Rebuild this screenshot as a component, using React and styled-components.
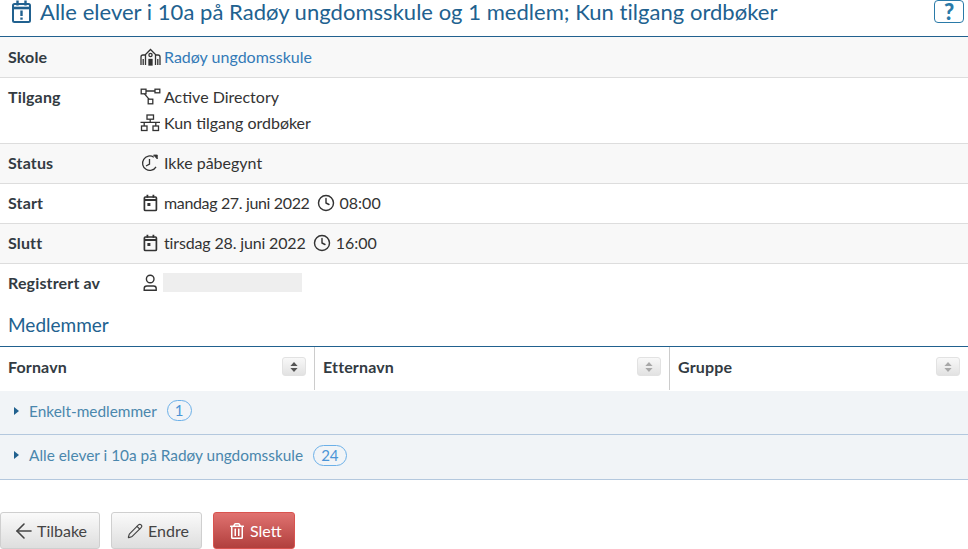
import React from "react";
import styled, { createGlobalStyle } from "styled-components";
import { ArrowLeft, Pencil, Clock } from "lucide-react";
import { FaRegTrashAlt } from "react-icons/fa";

const GlobalStyle = createGlobalStyle`
  html, body { margin: 0; padding: 0; background: #fff; }
  body { font-family: Lato, "Open Sans", sans-serif; font-size: 16px; color: #333; }
`;

const TitleIcon = () => (
  <svg width="21" height="24" viewBox="0 0 21 24" fill="none" stroke="#21618f" strokeWidth="2">
    <rect x="2" y="4" width="17" height="18" rx="1.5" />
    <path d="M2 8h17" strokeWidth="2.6" />
    <path d="M6.5 0.5v5M14.5 0.5v5" strokeWidth="2.4" />
    <path d="M10.5 10.5v5.5" strokeWidth="2.4" />
    <path d="M10.5 17.5v2.2" strokeWidth="2.4" />
  </svg>
);

const SchoolIcon = () => (
  <svg width="21" height="18" viewBox="0 0 21 18" fill="none" stroke="#333" strokeWidth="1.3">
    <path d="M5.5 17V6.5L10.5 1.5l5 5V17" />
    <path d="M1 17V9q0-2 2-2h2.5M20 17V9q0-2-2-2h-2.5" />
    <path d="M3.2 17v-6M17.8 17v-6" />
    <circle cx="10.5" cy="7" r="1.6" />
    <rect x="9" y="11.5" width="3" height="5.5" fill="#333" />
  </svg>
);

const NodesIcon = () => (
  <svg width="21" height="18" viewBox="0 0 21 18" fill="none" stroke="#333" strokeWidth="1.3">
    <rect x="1.2" y="1.2" width="4.8" height="4.6" />
    <rect x="15" y="1.2" width="4.8" height="3.6" />
    <rect x="8.2" y="11.2" width="4.6" height="4.6" />
    <path d="M6 3h9M4.5 5.8l4.5 5.4" />
  </svg>
);

const NetworkIcon = () => (
  <svg width="21" height="18" viewBox="0 0 21 18" fill="none" stroke="#333" strokeWidth="1.3">
    <rect x="7" y="1" width="6.5" height="4.2" />
    <rect x="1.5" y="12" width="5.5" height="4.5" />
    <rect x="13" y="12" width="5.5" height="4.5" />
    <path d="M10.2 5.2V8.4M0.5 8.4h19.5M4.2 8.4V12M15.8 8.4V12" />
  </svg>
);

const StatusIcon = () => (
  <svg width="21" height="18" viewBox="0 0 21 18" fill="none" stroke="#333" strokeWidth="1.3">
    <path d="M16 12.8A7.2 7.2 0 1 1 13.8 3.2" />
    <path d="M9.5 5v5.2L6 12" />
    <path d="M13.5 1h3.8v4z" fill="#333" strokeWidth="0.8" />
  </svg>
);

const CalendarIcon = () => (
  <svg width="21" height="18" viewBox="0 0 21 18" fill="none" stroke="#333" strokeWidth="1.7">
    <rect x="4.4" y="3" width="12" height="13.5" rx="1" />
    <path d="M4.4 6h12" strokeWidth="2" />
    <path d="M7.4 0.8v3M13.4 0.8v3" strokeWidth="1.8" />
    <rect x="7.4" y="9" width="3" height="3" fill="#333" stroke="none" />
  </svg>
);

const PersonIcon = () => (
  <svg width="21" height="18" viewBox="0 0 21 18" fill="none" stroke="#333" strokeWidth="1.4">
    <circle cx="10.2" cy="5" r="3.8" />
    <path d="M4.2 16.2v-1.6q0-2.6 2.6-2.6h6.8q2.6 0 2.6 2.6v1.6z" />
  </svg>
);

const SortIcon = ({ $muted }) => (
  <svg width="8" height="10" viewBox="0 0 8 10" fill={$muted ? "#a8a8a8" : "#555"}>
    <path d="M4 0l3.6 4H.4zM4 10L.4 6h7.2z" />
  </svg>
);

const TitleBar = styled.header`
  display: flex;
  align-items: flex-start;
  height: 36px;
  padding: 0 0 0 11px;
  border-bottom: 1px solid #21618f;
`;

const Title = styled.h1`
  flex: 1;
  margin: 0 0 0 8px;
  font-size: 22px;
  font-weight: 400;
  line-height: 24px;
  letter-spacing: 0.03px;
  color: #21618f;
  white-space: nowrap;
`;

const HelpButton = styled.button`
  width: 30px;
  height: 23px;
  margin-right: 4px;
  padding: 0;
  border: 1px solid #2a7aa8;
  border-radius: 4px;
  background: #fff;
  color: #2a7aa8;
  font: 900 22px/21px Lato, sans-serif;
`;

const InfoRow = styled.div`
  display: flex;
  padding: ${(p) => (p.$first ? "10px" : "9px")} 8px 10px;
  background: ${(p) => (p.$shaded ? "#f8f8f8" : "#fff")};
  border-bottom: ${(p) => (p.$last ? "none" : "1px solid #dddddd")};
  line-height: 20px;
`;

const Label = styled.div`
  width: 132px;
  flex: none;
  font-weight: 700;
  letter-spacing: 0.15px;
  color: #333b42;
`;

const Values = styled.div`
  display: flex;
  flex-direction: column;
  gap: 6px;
`;

const Value = styled.div`
  display: flex;
  align-items: center;
  gap: 3px;
  color: ${(p) => (p.$link ? "#337ab7" : "#333")};
`;

const DateText = styled.span`
  letter-spacing: ${(p) => p.$spacing}px;
`;

const TimeIcon = styled(Clock)`
  margin: 0 2px 0 4px;
`;

const Redacted = styled.span`
  display: block;
  align-self: flex-start;
  width: 139px;
  height: 19px;
  margin-left: -1px;
  background: #eeeeee;
`;

const SectionTitle = styled.h2`
  margin: 0;
  padding: 11px 8px 10px;
  font-size: 19px;
  font-weight: 400;
  line-height: 22px;
  color: #21618f;
`;

const TableHead = styled.div`
  display: grid;
  grid-template-columns: 315px 355px 1fr;
  height: 43px;
  margin-bottom: 1px;
  border-top: 1px solid #21618f;
`;

const HeadCell = styled.div`
  display: flex;
  align-items: center;
  justify-content: space-between;
  padding: 0 8px 4px;
  font-weight: 700;
  letter-spacing: 0.15px;
  color: #333b42;
  border-right: ${(p) => (p.$divider ? "1px solid #cccccc" : "none")};
`;

const SortButton = styled.span`
  display: flex;
  align-items: center;
  justify-content: center;
  width: 22px;
  height: 17px;
  border: 1px solid #e2e2e2;
  border-radius: 3px;
  background: linear-gradient(#f8f8f8, #e2e2e2);
`;

const GroupRow = styled.div`
  display: flex;
  align-items: center;
  box-sizing: border-box;
  height: ${(p) => p.$height}px;
  padding: 0 0 4px 14px;
  background: #f1f4f7;
  border-bottom: 1px solid #b4c8de;
  font-size: 15.4px;
  color: #4a87ad;
`;

const Caret = styled.span`
  width: 0;
  height: 0;
  border-left: 5px solid #21618f;
  border-top: 4px solid transparent;
  border-bottom: 4px solid transparent;
  margin-right: 10px;
`;

const Count = styled.span`
  margin-left: 10px;
  padding: 0 7px;
  border: 1px solid #6cb0e8;
  border-radius: 11px;
  line-height: 19px;
  font-size: 15px;
  color: #4b94d6;
`;

const Actions = styled.div`
  display: flex;
  gap: 11px;
  padding-top: 32px;
`;

const ActionButton = styled.button`
  display: flex;
  align-items: center;
  gap: 5px;
  height: 37px;
  padding: 0 12px 0 15px;
  border-radius: 3px;
  border: 1px solid ${(p) => (p.$danger ? "#d9534f" : "#cfcfcf")};
  background: ${(p) =>
    p.$danger
      ? "linear-gradient(#e07270, #b13f3d)"
      : "linear-gradient(#fafafa, #dedede)"};
  color: ${(p) => (p.$danger ? "#fff" : "#444")};
  font: 400 16px Lato, sans-serif;
`;

const BackArrow = styled(ArrowLeft)`
  margin: 0 -4px;
`;

export default function App() {
  return (
    <>
      <GlobalStyle />
      <TitleBar>
        <TitleIcon />
        <Title>Alle elever i 10a på Radøy ungdomsskule og 1 medlem; Kun tilgang ordbøker</Title>
        <HelpButton>?</HelpButton>
      </TitleBar>

      <InfoRow $shaded $first>
        <Label>Skole</Label>
        <Value $link><SchoolIcon />Radøy ungdomsskule</Value>
      </InfoRow>
      <InfoRow>
        <Label>Tilgang</Label>
        <Values>
          <Value><NodesIcon />Active Directory</Value>
          <Value><NetworkIcon />Kun tilgang ordbøker</Value>
        </Values>
      </InfoRow>
      <InfoRow $shaded>
        <Label>Status</Label>
        <Value><StatusIcon />Ikke påbegynt</Value>
      </InfoRow>
      <InfoRow>
        <Label>Start</Label>
        <Value>
          <CalendarIcon /><DateText $spacing={-0.35}>mandag 27. juni 2022</DateText>
          <TimeIcon size={18} strokeWidth={1.9} />08:00
        </Value>
      </InfoRow>
      <InfoRow $shaded>
        <Label>Slutt</Label>
        <Value>
          <CalendarIcon /><DateText $spacing={-0.15}>tirsdag 28. juni 2022</DateText>
          <TimeIcon size={18} strokeWidth={1.9} />16:00
        </Value>
      </InfoRow>
      <InfoRow $last>
        <Label>Registrert av</Label>
        <Value>
          <PersonIcon />
          <Redacted />
        </Value>
      </InfoRow>

      <SectionTitle>Medlemmer</SectionTitle>
      <TableHead>
        <HeadCell $divider>Fornavn<SortButton><SortIcon /></SortButton></HeadCell>
        <HeadCell $divider>Etternavn<SortButton><SortIcon $muted /></SortButton></HeadCell>
        <HeadCell>Gruppe<SortButton><SortIcon $muted /></SortButton></HeadCell>
      </TableHead>
      <GroupRow $height={44}>
        <Caret />Enkelt-medlemmer<Count>1</Count>
      </GroupRow>
      <GroupRow $height={45}>
        <Caret />Alle elever i 10a på Radøy ungdomsskule<Count>24</Count>
      </GroupRow>

      <Actions>
        <ActionButton><BackArrow size={24} strokeWidth={1.6} />Tilbake</ActionButton>
        <ActionButton><Pencil size={16} strokeWidth={1.7} />Endre</ActionButton>
        <ActionButton $danger><FaRegTrashAlt size={16} />Slett</ActionButton>
      </Actions>
    </>
  );
}
